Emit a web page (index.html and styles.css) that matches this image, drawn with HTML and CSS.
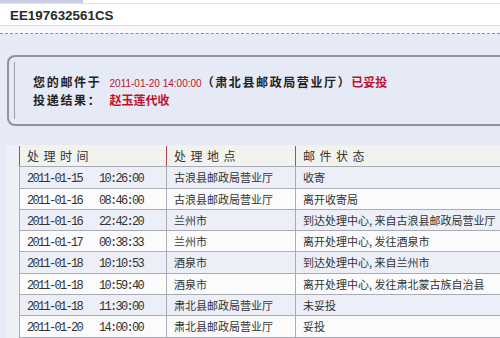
FILE: index.html
```html
<!DOCTYPE html>
<html lang="zh-CN">
<head>
<meta charset="utf-8">
<link rel="stylesheet" href="styles.css">
</head>
<body>
<div class="tabs"><div class="tab"></div></div>
<div class="title">EE197632561CS</div>
<div class="sep"></div>
<div class="main">
  <div class="summary">
    <div class="line"><span class="label">您的邮件于</span><span class="date">2011-01-20 14:00:00</span><span class="place">（肃北县邮政局营业厅）</span><span class="status">已妥投</span></div>
    <div class="line"><span class="label">投递结果：</span><span class="result">赵玉莲代收</span></div>
  </div>
  <div class="tablewrap">
    <div class="grid">
      <div class="row head"><div class="cell">处理时间</div><div class="cell">处理地点</div><div class="cell">邮件状态</div></div>
      <div class="row odd"><div class="cell"><span class="d">2011-01-15</span><span class="t">10:26:00</span></div><div class="cell">古浪县邮政局营业厅</div><div class="cell">收寄</div></div>
      <div class="row"><div class="cell"><span class="d">2011-01-16</span><span class="t">08:46:00</span></div><div class="cell">古浪县邮政局营业厅</div><div class="cell">离开收寄局</div></div>
      <div class="row odd"><div class="cell"><span class="d">2011-01-16</span><span class="t">22:42:20</span></div><div class="cell">兰州市</div><div class="cell">到达处理中心, 来自古浪县邮政局营业厅</div></div>
      <div class="row"><div class="cell"><span class="d">2011-01-17</span><span class="t">00:38:33</span></div><div class="cell">兰州市</div><div class="cell">离开处理中心, 发往酒泉市</div></div>
      <div class="row odd"><div class="cell"><span class="d">2011-01-18</span><span class="t">10:10:53</span></div><div class="cell">酒泉市</div><div class="cell">到达处理中心, 来自兰州市</div></div>
      <div class="row"><div class="cell"><span class="d">2011-01-18</span><span class="t">10:59:40</span></div><div class="cell">酒泉市</div><div class="cell">离开处理中心, 发往肃北蒙古族自治县</div></div>
      <div class="row odd"><div class="cell"><span class="d">2011-01-18</span><span class="t">11:30:00</span></div><div class="cell">肃北县邮政局营业厅</div><div class="cell">未妥投</div></div>
      <div class="row"><div class="cell"><span class="d">2011-01-20</span><span class="t">14:00:00</span></div><div class="cell">肃北县邮政局营业厅</div><div class="cell">妥投</div></div>
    </div>
  </div>
</div>
</body>
</html>
```

FILE: styles.css
```css
html, body {
  margin: 0;
  padding: 0;
  width: 500px;
  height: 338px;
  overflow: hidden;
  background: #ffffff;
  font-family: "Liberation Sans", "Noto Sans CJK SC", sans-serif;
  color: #333;
}
.tabs {
  height: 3px;
  border-bottom: 1px solid #e2e2e2;
}
.tab {
  width: 83px;
  height: 3px;
  background: #c9cce6;
}
.title {
  height: 18px;
  line-height: 18px;
  padding: 3px 0 0 10px;
  font-size: 13.4px;
  font-weight: bold;
  color: #2a2a2a;
  border-bottom: 1px solid #dedede;
}
.sep {
  height: 7px;
  background: #f9f9fb;
  border-bottom: 1px dashed #8e8e96;
}
.main {
  background: #e6e9f6;
  padding-top: 21px;
  height: 400px;
}
.summary {
  position: relative;
  margin-left: 7px;
  margin-right: -20px;
  height: 71px;
  padding: 16px 0 0 24px;
  box-sizing: border-box;
  border: 2px solid #8e939e;
  border-right: none;
  border-radius: 8px 0 0 8px;
}
.summary::before {
  content: "";
  position: absolute;
  left: 5px;
  top: 5px;
  bottom: 5px;
  border-left: 1px solid #9a9ea8;
}
.line {
  height: 18px;
  line-height: 18px;
  white-space: nowrap;
  font-family: "Noto Sans CJK SC", sans-serif;
  font-size: 12px;
  font-weight: bold;
  color: #222;
}
.label {
  letter-spacing: 1.7px;
  margin-right: 8px;
}
.date {
  font-family: "Liberation Sans", sans-serif;
  font-weight: normal;
  font-size: 10px;
  color: #c4102a;
}
.place {
  letter-spacing: 1.6px;
}
.status, .result {
  color: #c4102a;
}
.tablewrap {
  margin-top: 19px;
  margin-left: 6px;
  padding: 1px 0 0 13px;
  background: #eef0f8;
}
.grid {
  width: 560px;
}
.row {
  display: grid;
  grid-template-columns: 147px 129px 1fr;
  height: 20.3px;
  border-bottom: 1px solid #a9abb5;
  background: #fbfbfc;
  font-family: "Noto Sans CJK SC", sans-serif;
  font-size: 11px;
  color: #333;
}
.row.odd {
  background: #eceff8;
}
.row.head {
  background: #f2f2ee;
  font-size: 12px;
  letter-spacing: 4.5px;
}
.cell {
  border-left: 1px solid #a9abb5;
  padding-left: 7px;
  line-height: 20px;
  white-space: nowrap;
  overflow: hidden;
}
.row.head .cell {
  border-left-color: #c8404c;
}
.d, .t {
  font-family: "Liberation Mono", monospace;
  font-size: 12px;
  letter-spacing: -1.7px;
}
.d {
  display: inline-block;
  width: 72px;
}
```
